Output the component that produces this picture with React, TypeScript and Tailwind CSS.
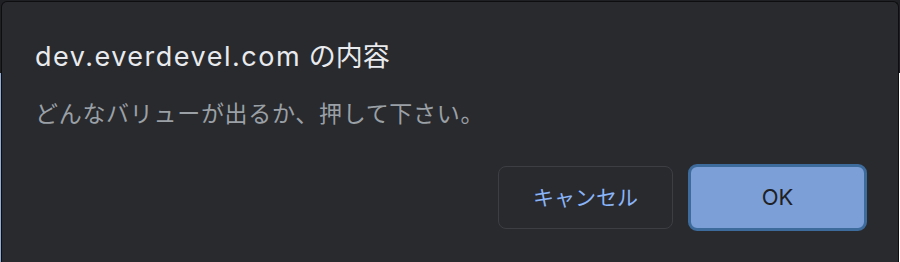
export default function App() {
  return (
    <div className="flex h-[262px] w-[900px] overflow-hidden bg-[#1f2023] font-['Inter','Noto_Sans_CJK_JP',sans-serif]">
      <div className="flex w-px flex-col">
        <div className="h-[73px] bg-[#1f2023]" />
        <div className="flex-1 bg-[#8fabd8]" />
      </div>
      <div className="mt-px flex flex-1 flex-col rounded-t-[6px] border border-b-0 border-[#0e0e10] bg-[#292a2e] pl-[33px] pr-[31px] pt-[37px]">
        <h1 className="text-[27px] leading-[36px] text-[#e8eaed]">
          <span className="tracking-[1.5px]">dev.everdevel.com</span> の内容
        </h1>
        <p className="mt-[23px] text-[23px] leading-[32px] tracking-[0.7px] text-[#9aa0a6]">
          どんなバリューが出るか、押して下さい。
        </p>
        <div className="mt-[34px] flex items-center justify-end gap-[15px]">
          <button className="h-[63px] w-[175px] rounded-[8px] border border-[#3c3e43] text-[21px] text-[#8ab4f8]">
            キャンセル
          </button>
          <button className="h-[67px] w-[179px] rounded-[9px] border-[3px] border-[#3d6b9c] bg-[#7b9fd6] text-[22px] text-[#202124]">
            OK
          </button>
        </div>
      </div>
      <div className="flex w-px flex-col">
        <div className="h-[73px] bg-[#1f2023]" />
        <div className="flex-1 bg-white" />
      </div>
    </div>
  );
}
